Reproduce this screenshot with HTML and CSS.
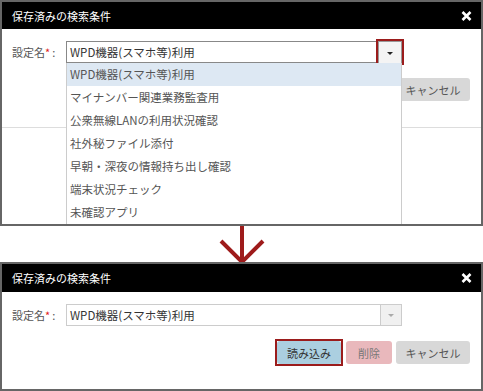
FILE: index.html
```html
<!DOCTYPE html>
<html lang="ja">
<head>
  <meta charset="UTF-8">
  <title>保存済みの検索条件</title>
  <link rel="stylesheet" href="styles.css">
</head>
<body>

  <!-- before: list opened -->
  <div class="shot shot-open">
    <div class="titlebar">
      <span>保存済みの検索条件</span>
      <svg class="close" width="11" height="10" viewBox="0 0 11 10"><path d="M1.5 1L9.5 9M9.5 1L1.5 9" stroke="#fff" stroke-width="2.6"/></svg>
    </div>
    <div class="dialog-body">
      <div class="row">
        <label class="label">設定名<span class="req">*</span>:</label>
        <div class="combo combo-open">
          <div class="combo-value">WPD機器(スマホ等)利用</div>
          <div class="mark">
            <div class="combo-btn"><span class="tri"></span></div>
          </div>
        </div>
      </div>
      <div class="actions">
        <button class="btn btn-load">読み込み</button>
        <button class="btn btn-del">削除</button>
        <button class="btn btn-cancel">キャンセル</button>
      </div>
    </div>

    <ul class="dropdown">
      <li class="selected">WPD機器(スマホ等)利用</li>
      <li>マイナンバー関連業務監査用</li>
      <li>公衆無線LANの利用状況確認</li>
      <li>社外秘ファイル添付</li>
      <li>早朝・深夜の情報持ち出し確認</li>
      <li>端末状況チェック</li>
      <li>未確認アプリ</li>
    </ul>
  </div>

  <div class="gap">
    <svg class="arrow" width="48" height="40" viewBox="0 0 48 40">
      <path d="M24 0V36M3 15L24 36L45 15" fill="none" stroke="#9e1b1b" stroke-width="4"/>
    </svg>
  </div>

  <!-- after: item chosen -->
  <div class="shot shot-closed">
    <div class="titlebar">
      <span>保存済みの検索条件</span>
      <svg class="close" width="11" height="10" viewBox="0 0 11 10"><path d="M1.5 1L9.5 9M9.5 1L1.5 9" stroke="#fff" stroke-width="2.6"/></svg>
    </div>
    <div class="dialog-body">
      <div class="row">
        <label class="label">設定名<span class="req">*</span>:</label>
        <div class="combo">
          <div class="combo-value">WPD機器(スマホ等)利用</div>
          <div class="combo-btn"><span class="tri"></span></div>
        </div>
      </div>
      <div class="actions">
        <span class="mark"><button class="btn btn-load">読み込み</button></span>
        <button class="btn btn-del">削除</button>
        <button class="btn btn-cancel">キャンセル</button>
      </div>
    </div>
  </div>

</body>
</html>
```

FILE: styles.css
```css
body {
  margin: 0;
  width: 483px;
  background: #fff;
  font-family: "Noto Sans CJK JP", "Noto Sans", sans-serif;
  font-size: 11px;
  color: #555;
}

.shot {
  position: relative;
  box-sizing: border-box;
  width: 483px;
  border: 2px solid #666;
  overflow: hidden;
  background: #fff;
}
.shot-open {
  height: 226px;
}
.shot-closed {
  height: 129px;
}

.titlebar {
  display: flex;
  align-items: center;
  justify-content: space-between;
  height: 27px;
  padding: 0 9px 0 10px;
  background: #000;
  color: #fff;
  font-size: 11px;
}
.shot-closed .titlebar {
  height: 28px;
}

.dialog-body {
  box-sizing: border-box;
  height: 99px;
  padding: 12px 11px 0 10px;
  border-bottom: 1px solid #ddd;
}
.shot-closed .dialog-body {
  border-bottom: none;
}

.row {
  display: flex;
  align-items: center;
}
.label {
  width: 54px;
  color: #555;
}
.req {
  color: #e02020;
  margin-right: 2px;
}

.combo {
  display: flex;
  box-sizing: border-box;
  width: 336px;
  height: 22px;
  border: 1px solid #ccc;
  background: #fff;
}
.combo-value {
  flex: 1;
  padding-left: 3px;
  line-height: 20px;
  font-size: 11.5px;
  color: #333;
}
.combo-btn {
  display: flex;
  align-items: center;
  justify-content: center;
  width: 20px;
  background: #f0f0f0;
  border-left: 1px solid #ccc;
}
.tri {
  width: 0;
  height: 0;
  border-left: 3px solid transparent;
  border-right: 3px solid transparent;
  border-top: 3px solid #aaa;
}

.combo-open {
  border-color: #888;
}
.combo-open .mark {
  margin: -3px -3px -3px 0;
}
.combo-open .combo-btn {
  box-sizing: border-box;
  width: 24px;
  height: 24px;
  border: 1px solid #999;
  background: #f4f4f4;
}
.combo-open .tri {
  border-top-color: #222;
}

/* red frame that points at the control */
.mark {
  display: flex;
  border: 2px solid #9b1c1c;
}

.actions {
  display: flex;
  justify-content: flex-end;
  align-items: center;
  gap: 4px;
  margin-top: 15px;
}
.btn {
  height: 23px;
  padding: 0;
  border: none;
  border-radius: 3px;
  font-family: inherit;
  font-size: 11px;
  white-space: nowrap;
}
.btn-load {
  width: 64px;
  background: #abcfe0;
  color: #333;
}
.actions .mark {
  margin: -2px -1px -2px 0;
}
.btn-del {
  width: 46px;
  background: #e9b8bc;
  color: #777;
}
.btn-cancel {
  width: 74px;
  background: #d8d8d8;
  color: #555;
}

/* open list lies over the buttons */
.dropdown {
  position: absolute;
  left: 64px;
  top: 61px;
  box-sizing: border-box;
  width: 336px;
  margin: 0;
  padding: 0;
  list-style: none;
  background: #fff;
  border: 1px solid #ccc;
  border-top: none;
}
.dropdown li {
  height: 23px;
  padding-left: 3px;
  line-height: 23px;
  font-size: 11.5px;
  color: #555;
}
.dropdown .selected {
  background: #dde8f3;
}

.gap {
  position: relative;
  height: 36px;
}
.arrow {
  position: absolute;
  left: 218px;
  top: 0;
}
```
